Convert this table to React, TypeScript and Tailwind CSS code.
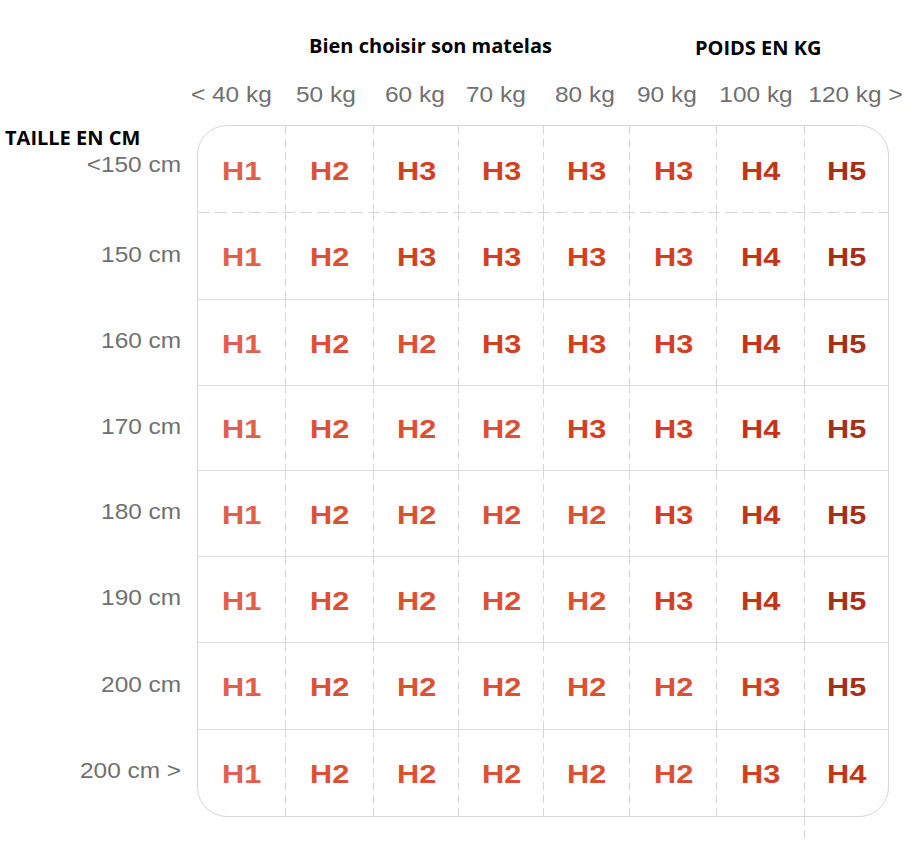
import React from 'react';

const weights = [
    { t: '< 40 kg', s: '-translate-x-[10px]' },
    { t: '50 kg', s: '-translate-x-[3px]' },
    { t: '60 kg', s: '-translate-x-[1px]' },
    { t: '70 kg', s: '-translate-x-[5px]' },
    { t: '80 kg', s: '-translate-x-[1px]' },
    { t: '90 kg', s: '-translate-x-[6px]' },
    { t: '100 kg', s: '-translate-x-[4px]' },
    { t: '120 kg >', s: 'translate-x-[9px]' },
];

const rows = [
    { label: '<150 cm', h: 'h-[87px]', cells: ['H1', 'H2', 'H3', 'H3', 'H3', 'H3', 'H4', 'H5'] },
    { label: '150 cm', h: 'h-[87px]', cells: ['H1', 'H2', 'H3', 'H3', 'H3', 'H3', 'H4', 'H5'] },
    { label: '160 cm', h: 'h-[86px]', cells: ['H1', 'H2', 'H2', 'H3', 'H3', 'H3', 'H4', 'H5'] },
    { label: '170 cm', h: 'h-[85px]', cells: ['H1', 'H2', 'H2', 'H2', 'H3', 'H3', 'H4', 'H5'] },
    { label: '180 cm', h: 'h-[86px]', cells: ['H1', 'H2', 'H2', 'H2', 'H2', 'H3', 'H4', 'H5'] },
    { label: '190 cm', h: 'h-[86px]', cells: ['H1', 'H2', 'H2', 'H2', 'H2', 'H3', 'H4', 'H5'] },
    { label: '200 cm', h: 'h-[87px]', cells: ['H1', 'H2', 'H2', 'H2', 'H2', 'H2', 'H3', 'H5'] },
    { label: '200 cm >', h: 'h-[86px]', cells: ['H1', 'H2', 'H2', 'H2', 'H2', 'H2', 'H3', 'H4'] },
];

const tone: Record<string, string> = {
    H1: 'text-[#e0604a]',
    H2: 'text-[#dc5034]',
    H3: 'text-[#d4401f]',
    H4: 'text-[#c43418]',
    H5: 'text-[#a62f18]',
};

const cols = 'grid grid-cols-[88px_88px_85px_85px_86px_87px_88px_1fr]';
const vDash = 'bg-[repeating-linear-gradient(to_bottom,#d6d6d6_0_8px,transparent_8px_13px)] bg-[length:1px_100%] bg-right bg-no-repeat';
const hDash = 'bg-[repeating-linear-gradient(to_right,#d6d6d6_0_12px,transparent_12px_17px)] bg-[length:100%_1px] bg-bottom bg-no-repeat';

// the source text is drawn a little wide, so the Arial-like labels get a horizontal stretch
const label = 'inline-block text-[22px] scale-x-[1.11] text-[#707070] whitespace-nowrap';

export default function App() {
    return (
        <div className="w-[920px] h-[842px] bg-white overflow-hidden font-['Liberation_Sans',Arial,sans-serif]">
            {/* Titles */}
            <div className="flex items-end pt-[33px] h-[59px] font-['Open_Sans',sans-serif] font-bold text-black text-[20px] leading-[26px]">
                <span className="ml-[309px]">Bien choisir son matelas</span>
                <span className="ml-[143px] translate-y-[2px]">POIDS EN KG</span>
            </div>

            {/* Weight headers */}
            <div className={`${cols} mt-[22px] ml-[197px] w-[692px] h-[28px] leading-[28px]`}>
                {weights.map((w) => (
                    <div key={w.t} className={`flex justify-center ${w.s}`}>
                        <span className={label}>{w.t}</span>
                    </div>
                ))}
            </div>

            <div className="flex mt-[16px]">
                {/* Height labels */}
                <div className="w-[197px] flex flex-col pt-[1px]">
                    {rows.map((r, i) => (
                        i === 0 ? (
                            <div key={r.label} className={`${r.h} flex flex-col`}>
                                <span className="pl-[5px] font-['Open_Sans',sans-serif] font-bold text-black text-[20px] leading-[24px]">TAILLE EN CM</span>
                                <span className="self-end pr-[16px] leading-[30px]">
                                    <span className={`${label} origin-right`}>{r.label}</span>
                                </span>
                            </div>
                        ) : (
                            <div key={r.label} className={`${r.h} flex items-center justify-end pr-[16px] pb-[5px]`}>
                                <span className={`${label} origin-right`}>{r.label}</span>
                            </div>
                        )
                    ))}
                </div>

                {/* Grid */}
                <div className="w-[692px] h-[692px] border border-[#d6d6d6] rounded-[30px] overflow-hidden flex flex-col">
                    {rows.map((r, ri) => (
                        <div
                            key={r.label}
                            className={`${cols} ${r.h} ${ri === 0 ? hDash : ''} ${ri > 0 && ri < 7 ? 'border-b border-[#dcdcdc]' : ''}`}
                        >
                            {r.cells.map((c, ci) => (
                                <div
                                    key={ci}
                                    className={`flex items-center justify-center pt-[3px] ${ci < 7 ? vDash : ''}`}
                                >
                                    <span className={`inline-block font-bold text-[26px] scale-x-[1.18] ${tone[c]}`}>{c}</span>
                                </div>
                            ))}
                        </div>
                    ))}
                </div>
            </div>

            {/* stray guide below the grid */}
            <div className={`ml-[804px] w-[1px] h-[26px] ${vDash}`} />
        </div>
    );
}
